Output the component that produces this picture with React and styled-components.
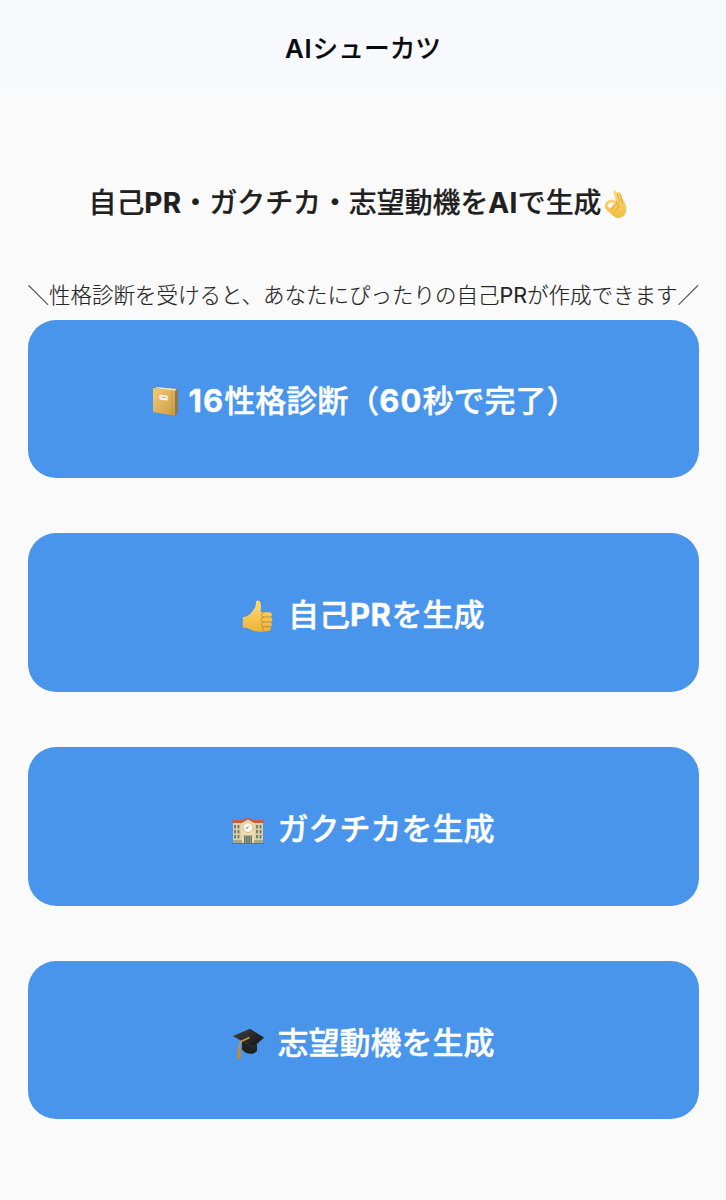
import React from "react";
import styled, { createGlobalStyle } from "styled-components";

const GlobalStyle = createGlobalStyle`
  * { box-sizing: border-box; }
  body { margin: 0; background: #fafafa; font-family: Inter, "Noto Sans CJK JP", sans-serif; }
`;

const Page = styled.div`
  min-height: 1200px;
  overflow: hidden;
  background: #fafafa;
`;
const Latin = styled.span`
  font-weight: ${(p) => p.$weight};
  letter-spacing: ${(p) => p.$tracking || 0}px;
`;
const Header = styled.header`
  height: 92px;
  padding-top: 29px;
  background: #f8f9fc;
`;
const AppTitle = styled.h1`
  margin: 0;
  color: #0b0b0d;
  font-size: 25.7px;
  font-weight: 500;
  line-height: 40px;
  text-align: center;
  white-space: nowrap;
  -webkit-text-stroke: 0.15px currentColor;
`;
const Main = styled.main`
  display: flex;
  flex-direction: column;
  padding: 91px 27px 0 27.5px;
`;
const Headline = styled.h2`
  display: flex;
  align-items: center;
  gap: 3px;
  margin: 0 0 0 61px;
  height: 40px;
  color: #202020;
  font-size: 27.9px;
  font-weight: 500;
  line-height: 40px;
  white-space: nowrap;
  -webkit-text-stroke: 0.2px currentColor;
`;
const Note = styled.p`
  margin: 57px 0 9.5px;
  height: 30px;
  display: flex;
  justify-content: center;
  color: #252525;
  font-size: 21.5px;
  font-weight: 300;
  line-height: 30px;
  white-space: nowrap;
  -webkit-text-stroke: 0.15px currentColor;
`;
const Menu = styled.nav`
  display: flex;
  flex-direction: column;
  gap: 55.3px;
`;
const MenuButton = styled.button`
  display: flex;
  align-items: center;
  width: 100%;
  height: 158.5px;
  padding: 5px 0 0 ${(p) => p.$start}px;
  gap: ${(p) => p.$gap}px;
  border: 0;
  border-radius: 28px;
  background: #4a95ec;
  color: #fff;
  font-family: inherit;
  font-size: 31px;
  font-weight: 500;
  line-height: 46px;
  white-space: nowrap;
  -webkit-text-stroke: 0.4px currentColor;
`;
const Label = styled.span`
  display: block;
`;
const Icon = styled.svg`
  display: block;
  flex: none;
  margin-top: ${(p) => p.$drop || 0}px;
`;

const Mixed = ({ text, weight, tracking }) =>
  text.split(/([A-Za-z0-9]+)/).map((part, i) =>
    i % 2 ? <Latin key={i} $weight={weight} $tracking={tracking}>{part}</Latin> : part
  );

const OkHand = () => (
  <Icon width="24" height="29" viewBox="0 0 24 29" $drop={2}>
    <defs>
      <linearGradient id="ok" x1="0" y1="0" x2="0" y2="1">
        <stop offset="0" stopColor="#ffdc78" />
        <stop offset="1" stopColor="#f2bb42" />
      </linearGradient>
    </defs>
    <path fill="url(#ok)" d="M9.4 2.3C9 .4 11.6-.2 12.4 1.5l1 2c-.1-2 2.5-2.3 3.2-.4l2 6c2.7 3.2 3.9 7.2 3.5 11.2-.4 4.7-3.4 7.6-7.4 7.6-3.4 0-5.6-1.7-7.7-4.2L2.6 20C.5 17.8.2 14.6 2 12.3c2.4-3 7.3-3.3 10.2-.8Z" />
    <path fill="#fffaf0" d="M4 14.2c1.4-2.1 5.2-2 6.7-.3-1.7 1-3 2.5-3.4 4.7l-2.7-1.3c-1.2-.7-1.4-2-.6-3.1Z" />
    <path d="M12.2 11.4 13.6 14M13.4 3.4l2.5 9M16.6 4.5l2 8.6M7.8 19.5c.3-2.7 2-4.8 4.4-5.2 2.2-.3 3.5 1.4 2.4 3-.7 1-2.3 1.5-3 2.8" fill="none" stroke="#d49a31" strokeWidth=".8" strokeLinecap="round" />
  </Icon>
);

const Notebook = () => (
  <Icon width="28" height="31" viewBox="0 0 28 31">
    <defs>
      <linearGradient id="book" x1="0" y1="0" x2="1" y2="1">
        <stop stopColor="#efcc78" />
        <stop offset="1" stopColor="#cf9b3f" />
      </linearGradient>
    </defs>
    <path d="M1 1.5 5 .4l21 2.3v23l-3.4 4.6Z" fill="#76736a" />
    <path d="M22.5 5 26 2.7v23l-3.4 4.1Z" fill="#8d7750" />
    <path d="M2.5 1.9 5 1l20 2-2.3 2Z" fill="#eee9da" />
    <path d="m1 2 21 2.4q1 .1 1 1v23.2q0 1.2-1.2 1L2 26.3Q1 26.1 1 25Z" fill="url(#book)" />
    <path d="m20 4.4.3 24.8" fill="none" stroke="#b98a3c" strokeWidth=".5" />
    <path d="m8.5 8.8 6 .8q1.2.3 1.2 1.4v2.2q0 1.5-1.4 1.3l-5.7-.7Q7.3 13.5 7.3 12v-2q0-1.3 1.2-1.2Z" fill="#f8f5e9" />
    <path d="m9.5 11.1 4.5.6" stroke="#8b8b8b" strokeWidth=".7" />
  </Icon>
);

const ThumbsUp = () => (
  <Icon width="31" height="33" viewBox="0 0 31 33" $drop={2}>
    <defs>
      <linearGradient id="thumb" x1="0" y1="0" x2="0" y2="1">
        <stop stopColor="#ffdd72" />
        <stop offset="1" stopColor="#edb33a" />
      </linearGradient>
    </defs>
    <path fill="url(#thumb)" d="M14 2.4C14-.5 17.8.2 18.6 3c.7 2.8.4 6.5-.1 9.2h8.8c3 0 3.5 4.1.9 4.7 3 .8 2.7 4.5.2 5 2.4.9 2 4.2-.5 4.7 1.8 1.2 1.1 4.1-1.5 4.5-4.7.8-12.2 1.1-16.5-.8C7.3 28.8 5 27.8.8 27.6V17.2c4.9-.4 7-2.6 9.5-5.7C12.8 8.3 14 6 14 2.4Z" />
    <path d="M28 17h-6.8c-2.2 0-2.2-3.7 0-4.2M28 22h-7.2c-2.1 0-2.1-4 .4-5M27.6 26.7h-6.4c-2.3 0-2.2-3.6-.4-4.6M21.8 26.7c-2.2.7-1.5 4 .4 4.2" fill="none" stroke="#bd862c" strokeWidth=".9" strokeLinecap="round" />
  </Icon>
);

const windows = [3, 6.5, 25, 28.5];
const School = () => (
  <Icon width="32" height="27" viewBox="0 0 32 27" $drop={6}>
    <path d="M1 4h30v21H1Z" fill="#dfd0a2" />
    <path d="M.5 2h10L16 0l5.5 2h10v3H.5Z" fill="#cf5d43" />
    <path d="M9.5 4.3 16 1l6.5 3.3V25h-13Z" fill="#eadcae" />
    <path d="m9 4.6 7-4 7 4" fill="none" stroke="#c75a41" strokeWidth="1.5" />
    {[7, 12, 17].map((y) => windows.map((x) => (
      <rect key={`${x}-${y}`} x={x - 0.9} y={y} width="1.8" height="3.4" fill="#687678" />
    )))}
    <circle cx="16" cy="9.5" r="5" fill="#fffdf1" stroke="#b7a77b" strokeWidth=".7" />
    <path d="m16 9.5-2.2.9m2.2-.9 1-1" fill="none" stroke="#5e5b52" strokeWidth=".9" />
    <path d="M12 18h8v7h-8Z" fill="#60706d" />
    <path d="M11 17.5h10M13.5 18v7m5-7v7M16 18v7" stroke="#b9ad87" strokeWidth=".8" />
    <path d="M0 25h32v1H0Z" fill="#756e5f" />
    <path d="M1 22h9v3H1Zm21 0h9v3h-9Z" fill="#8f987c" fillOpacity=".7" />
  </Icon>
);

const GraduationCap = () => (
  <Icon width="33" height="31" viewBox="0 0 33 31" $drop={1}>
    <defs>
      <linearGradient id="cap" x1="0" y1="0" x2="1" y2="1">
        <stop stopColor="#404040" />
        <stop offset="1" stopColor="#111" />
      </linearGradient>
    </defs>
    <path d="m10 12 15 4.5v6.5c-3.7 4.7-11.8 3.2-15-1.5Z" fill="#202124" />
    <path d="M1 8 18 .8l14 8.8-10.5 9.6Z" fill="url(#cap)" />
    <path d="m1 8 20.5 11.2L32 9.6" fill="none" stroke="#4a4a4a" strokeWidth=".6" />
    <path d="m17.5 9.5-8.5 4c-1.6 2-1.4 5-2 8" fill="none" stroke="#d19337" strokeWidth="1.6" />
    <path d="m6 20 2.5.4.4 9c-1.2 1.3-2.6 1.3-3.9.5Z" fill="#c9892d" />
  </Icon>
);

const actions = [
  { label: "16性格診断（60秒で完了）", icon: Notebook, start: 124.5, gap: 8.5, tracking: 1.1 },
  { label: "自己PRを生成", icon: ThumbsUp, start: 214.5, gap: 15, tracking: 0.5 },
  { label: "ガクチカを生成", icon: School, start: 204.5, gap: 13.5 },
  { label: "志望動機を生成", icon: GraduationCap, start: 204, gap: 13 },
];

export default function App() {
  return (
    <Page>
      <GlobalStyle />
      <Header>
        <AppTitle><Mixed text="AIシューカツ" weight={600} tracking={0.9} /></AppTitle>
      </Header>
      <Main>
        <Headline>
          <span><Mixed text="自己PR・ガクチカ・志望動機をAIで生成" weight={700} tracking={0.4} /></span>
          <OkHand />
        </Headline>
        <Note><span><Mixed text="＼性格診断を受けると、あなたにぴったりの自己PRが作成できます／" weight={400} /></span></Note>
        <Menu>
          {actions.map(({ label, icon: Glyph, start, gap, tracking }) => (
            <MenuButton key={label} type="button" $start={start} $gap={gap}>
              <Glyph />
              <Label><Mixed text={label} weight={700} tracking={tracking} /></Label>
            </MenuButton>
          ))}
        </Menu>
      </Main>
    </Page>
  );
}
